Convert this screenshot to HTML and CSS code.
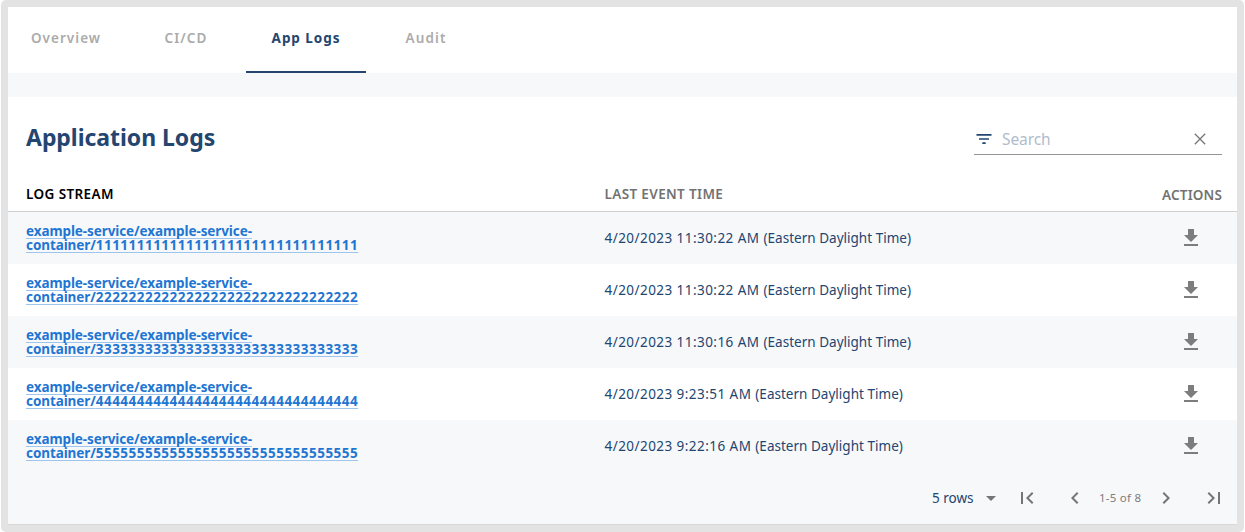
FILE: index.html
```html
<!DOCTYPE html>
<html lang="en">
<head>
<meta charset="utf-8">
<title>Application Logs</title>
<link rel="stylesheet" href="styles.css">
</head>
<body>
<svg width="0" height="0" class="defs">
  <symbol id="download" viewBox="0 0 24 24"><path d="M19 9h-4V3H9v6H5l7 7 7-7zM5 18v2h14v-2H5z"/></symbol>
</svg>
<main class="frame">
  <nav class="tabs">
    <a class="tab tab-overview"><span>Overview</span></a>
    <a class="tab tab-cicd"><span>CI/CD</span></a>
    <a class="tab tab-logs active"><span>App Logs</span></a>
    <a class="tab tab-audit"><span>Audit</span></a>
  </nav>
  <section class="panel">
    <header class="toolbar">
      <h1 class="title"><span>Application Logs</span></h1>
      <div class="search">
        <svg class="filter" width="20" height="20" viewBox="0 0 24 24"><path d="M10 18h4v-2h-4v2zM3 6v2h18V6H3zm3 7h12v-2H6v2z"/></svg>
        <span class="placeholder">Search</span>
        <svg class="clear" width="20" height="20" viewBox="0 0 20 20"><path d="M4.8 4.8l10.4 10.4M15.2 4.8L4.8 15.2"/></svg>
      </div>
    </header>
    <div class="row head">
      <span class="stream"><span class="h-stream">LOG STREAM</span></span>
      <span class="time"><span class="h-time">LAST EVENT TIME</span></span>
      <span class="h-actions">ACTIONS</span>
    </div>
    <div class="row">
      <a class="stream link"><span class="l1">example-service/example-service-</span><span class="l2">container/<span class="id">11111111111111111111111111111111</span></span></a>
      <span class="time">4/20/2023 11:30:22 AM <span class="zone">(Eastern Daylight Time)</span></span>
      <svg class="download" width="24" height="24"><use href="#download"/></svg>
    </div>
    <div class="row">
      <a class="stream link"><span class="l1">example-service/example-service-</span><span class="l2">container/<span class="id">22222222222222222222222222222222</span></span></a>
      <span class="time">4/20/2023 11:30:22 AM <span class="zone">(Eastern Daylight Time)</span></span>
      <svg class="download" width="24" height="24"><use href="#download"/></svg>
    </div>
    <div class="row">
      <a class="stream link"><span class="l1">example-service/example-service-</span><span class="l2">container/<span class="id">33333333333333333333333333333333</span></span></a>
      <span class="time">4/20/2023 11:30:16 AM <span class="zone">(Eastern Daylight Time)</span></span>
      <svg class="download" width="24" height="24"><use href="#download"/></svg>
    </div>
    <div class="row">
      <a class="stream link"><span class="l1">example-service/example-service-</span><span class="l2">container/<span class="id">44444444444444444444444444444444</span></span></a>
      <span class="time">4/20/2023 9:23:51 AM <span class="zone">(Eastern Daylight Time)</span></span>
      <svg class="download" width="24" height="24"><use href="#download"/></svg>
    </div>
    <div class="row">
      <a class="stream link"><span class="l1">example-service/example-service-</span><span class="l2">container/<span class="id">55555555555555555555555555555555</span></span></a>
      <span class="time">4/20/2023 9:22:16 AM <span class="zone">(Eastern Daylight Time)</span></span>
      <svg class="download" width="24" height="24"><use href="#download"/></svg>
    </div>
    <footer class="pager">
      <span class="rows">5 rows</span>
      <svg class="caret" width="24" height="24" viewBox="0 0 24 24"><path d="M7 10l5 5 5-5z"/></svg>
      <svg class="first" width="24" height="24" viewBox="0 0 24 24"><path d="M18.41 16.59L13.82 12l4.59-4.59L17 6l-6 6 6 6zM6 6h2v12H6z"/></svg>
      <svg class="prev" width="24" height="24" viewBox="0 0 24 24"><path d="M15.41 7.41L14 6l-6 6 6 6 1.41-1.41L10.83 12z"/></svg>
      <span class="range">1-5 of 8</span>
      <svg class="next" width="24" height="24" viewBox="0 0 24 24"><path d="M10 6L8.59 7.41 13.17 12l-4.58 4.59L10 18l6-6z"/></svg>
      <svg class="last" width="24" height="24" viewBox="0 0 24 24"><path d="M5.59 7.41L10.18 12l-4.59 4.59L7 18l6-6-6-6zM16 6h2v12h-2z"/></svg>
    </footer>
  </section>
</main>
</body>
</html>
```
FILE: styles.css
```css
* { box-sizing: border-box; }
body {
  margin: 0;
  background: #fff;
  font-family: "Noto Sans", "Open Sans", sans-serif;
  font-size: 13px;
  color: #23456f;
}
.defs { display: block; }
.frame {
  width: 1243px;
  height: 532px;
  margin-left: 1px;
  padding: 7px 7px 7px;
  background: #e3e3e3;
  border-radius: 5px;
}
.tabs {
  display: flex;
  height: 66px;
  background: #fff;
}
.tab {
  width: 120px;
  height: 66px;
  line-height: 62px;
  text-align: center;
  font-size: 13.5px;
  font-weight: 600;
  letter-spacing: 1.15px;
  color: #ababab;
}
.tab-overview { width: 118px; padding-right: 2px; letter-spacing: 1.05px; }
.tab.active {
  color: #23456f;
  font-weight: 700;
  letter-spacing: 0.95px;
  border-bottom: 2px solid #23456f;
}
.panel {
  height: 452px;
  background: #f7f8fa;
  padding-top: 24px;
  border-bottom: 1px solid #d8d8d8;
}
.toolbar {
  display: flex;
  justify-content: space-between;
  height: 80px;
  padding: 24px 15px 0 18px;
  background: #fff;
}
.title {
  margin: 0;
  font-size: 23px;
  font-weight: 700;
  letter-spacing: -0.04px;
  line-height: 33px;
}
.search {
  display: flex;
  align-items: center;
  width: 248px;
  height: 34px;
  padding-top: 2px;
  border-bottom: 1px solid #949494;
}
.filter { fill: #23456f; }
.placeholder {
  flex: 1;
  margin-left: 8px;
  font-size: 15.5px;
  letter-spacing: -0.1px;
  color: #b0bccc;
}
.clear {
  margin-right: 12px;
  fill: none;
  stroke: #757575;
  stroke-width: 1.3;
}
.row {
  display: flex;
  align-items: center;
  height: 52px;
  padding: 0 15px 0 18px;
  background: #fff;
}
.row:nth-child(odd) { background: #f7f8fa; }
.row.head {
  height: 35px;
  border-bottom: 1px solid #cfd2d5;
  color: #727272;
  font-weight: 600;
}
.stream { width: 578.5px; }
.h-stream { color: #000; font-size: 13.5px; letter-spacing: 0.4px; }
.h-time { font-size: 13.5px; letter-spacing: 0.36px; }
.h-actions { padding-top: 2px; font-size: 13.5px; letter-spacing: 0.15px; }
.time { flex: 1; font-size: 13.5px; letter-spacing: 0.45px; }
.zone { letter-spacing: 0.02px; }
.link {
  font-size: 13.5px;
  font-weight: 700;
  line-height: 14px;
  color: #1f76d2;
}
.l1, .l2 {
  display: block;
  width: fit-content;
  letter-spacing: -0.09px;
  text-decoration: underline 1px #a0c5ec;
  text-underline-offset: 2px;
  text-decoration-skip-ink: none;
}
.id { letter-spacing: 0.48px; }
.download { margin-right: 19px; fill: #7d7d7d; }
.pager {
  display: flex;
  align-items: center;
  height: 52px;
}
.pager svg { fill: #757575; }
.rows { margin-left: 924px; width: 47px; padding-bottom: 1px; font-size: 13.5px; }
.first { margin-left: 12px; }
.prev { margin-left: 24px; }
.range {
  width: 67px;
  padding-left: 12px;
  padding-bottom: 1px;
  font-size: 11.5px;
  letter-spacing: 0.25px;
  color: #7d7d7d;
}
.last { margin-left: 24px; }
```
